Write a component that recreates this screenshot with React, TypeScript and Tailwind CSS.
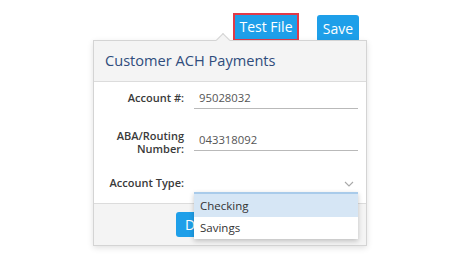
import React from "react";

export default function App() {
  return (
    <div
      className="relative w-[474px] h-[274px] bg-white overflow-hidden"
      style={{ fontFamily: '"Open Sans", "Liberation Sans", sans-serif' }}
    >
      <div className="flex items-start pt-[13px] pl-[233px] gap-[18px]">
        <button className="h-[28px] w-[66px] bg-[#1e9fe9] border-2 border-[#e23a48] text-white text-[14px] leading-none flex items-center justify-center">
          Test File
        </button>
        <button className="mt-[2px] h-[27px] w-[42px] bg-[#1e9fe9] rounded-[3px] text-white text-[14px] leading-none flex items-center justify-center">
          Save
        </button>
      </div>

      <div className="absolute left-[93px] top-[40px] w-[274px] border border-[#d4d4d4] bg-white shadow-[0_2px_6px_rgba(0,0,0,0.12)]">
        <div className="absolute left-[124px] -top-[6px] w-[10px] h-[10px] rotate-45 bg-[#f4f4f4] border-l border-t border-[#d4d4d4]" />
        <div className="relative h-[41px] bg-[#f4f4f4] border-b border-[#dcdcdc] flex items-center pl-[11px] text-[14.6px] text-[#2f4c7c]">
          Customer ACH Payments
        </div>
        <div className="pt-[6px] pb-[9px] pr-[8px] text-[11px]">
          <div className="flex items-center h-[21px]">
            <div className="w-[90px] text-right font-semibold text-[#3a3a3a]">Account #:</div>
            <div className="ml-[10px] flex-1 h-[21px] border-b border-[#b9b9b9] flex items-center pl-[5px] text-[11.3px] text-[#555]">
              95028032
            </div>
          </div>
          <div className="flex items-start mt-[19px]">
            <div className="w-[90px] text-right font-semibold text-[#3a3a3a] leading-[13px] pt-[1px]">
              ABA/Routing
              <br />
              Number:
            </div>
            <div className="ml-[10px] mt-[2px] flex-1 h-[21px] border-b border-[#b9b9b9] flex items-center pl-[5px] text-[11.3px] text-[#555]">
              043318092
            </div>
          </div>
          <div className="flex items-center h-[21px] mt-[18px]">
            <div className="w-[90px] text-right font-semibold text-[#3a3a3a]">Account Type:</div>
            <div className="ml-[10px] flex-1 h-[21px] flex items-center justify-end pr-[4px]">
              <svg width="10" height="6" viewBox="0 0 10 6" fill="none">
                <path d="M1 1l4 4 4-4" stroke="#a9a9a9" strokeWidth="1.1" />
              </svg>
            </div>
          </div>
        </div>
        <div className="h-[42px] bg-[#f4f4f4] border-t border-[#dcdcdc] flex items-start pt-[8px] pl-[82px]">
          <button className="h-[25px] px-[9px] bg-[#1e9fe9] rounded-[3px] text-white text-[14px] leading-none flex items-center">
            Download
          </button>
        </div>

        <div className="absolute left-[100px] top-[151px] w-[164px] bg-white border-t-2 border-[#a9cbea] shadow-[0_2px_5px_rgba(0,0,0,0.22)] text-[11.5px] text-[#333]">
          <div className="h-[23px] bg-[#d6e6f5] flex items-center pl-[6px]">Checking</div>
          <div className="h-[22px] flex items-center pl-[6px]">Savings</div>
        </div>
      </div>
    </div>
  );
}
